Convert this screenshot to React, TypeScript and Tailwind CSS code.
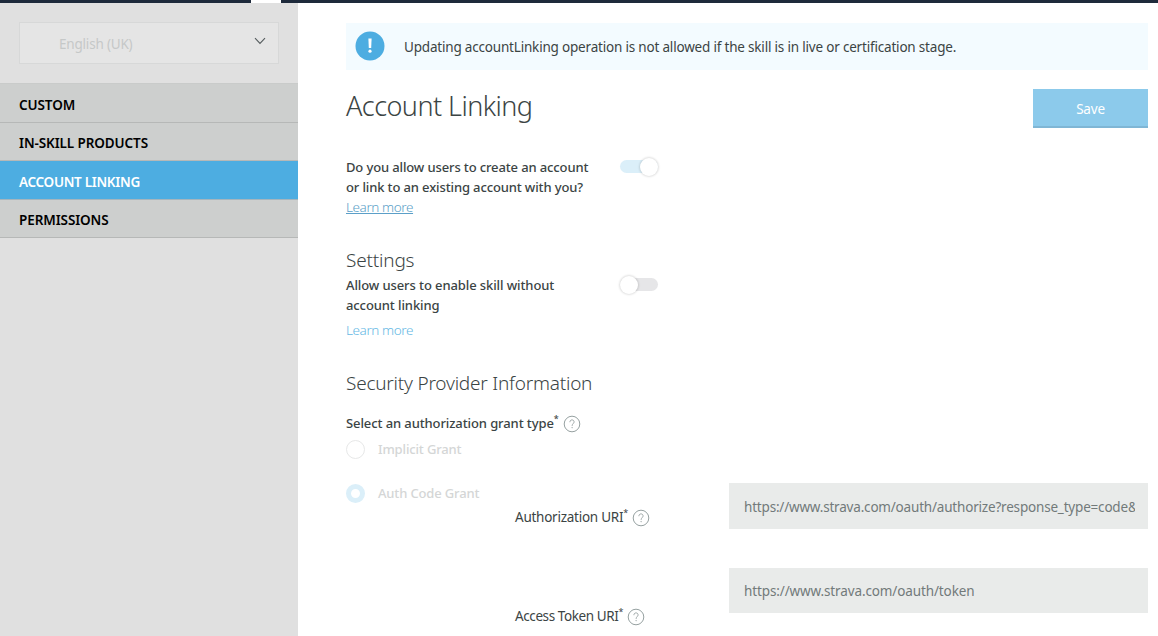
import type { ReactNode } from "react";

function HelpIcon() {
  return (
    <svg width="18" height="18" viewBox="0 0 18 18" fill="none" stroke="#8a9696" className="relative top-[0.5px] shrink-0">
      <circle cx="9" cy="9" r="7.8" strokeWidth="0.9" />
      <path d="M6.9 7.2c0-1.5.9-2.3 2.1-2.3s2.1.8 2.1 2c0 1.7-2 1.8-2 4" strokeWidth="0.8" />
      <circle cx="9.1" cy="12.7" r="0.35" strokeWidth="0.6" />
    </svg>
  );
}

function Toggle({ on }: { on: boolean }) {
  return (
    <div
      className={
        on
          ? "mt-[3px] flex h-[13px] w-[38px] items-center justify-end rounded-full bg-[#dbeff9]"
          : "mt-[3px] flex h-[13px] w-[38px] items-center justify-start rounded-full bg-[#e6e6e8]"
      }
    >
      <div className="mt-px size-[18px] shrink-0 rounded-full bg-white shadow-[0_0_2px_1px_rgba(0,0,0,0.12)]" />
    </div>
  );
}

function NavItem({ children, active = false }: { children: ReactNode; active?: boolean }) {
  return (
    <li
      className={
        active
          ? "flex h-[38.5px] items-center border-b border-[#a5b5bd] bg-[#4dade1] pt-[4px] pl-[19px] tracking-[-0.3px] text-white"
          : "flex h-[38.5px] items-center border-b border-[#b6b8b7] bg-[#cdcfce] pt-[4px] pl-[19px] tracking-[-0.1px] text-black"
      }
    >
      {children}
    </li>
  );
}

function FieldLabel({ children }: { children: ReactNode }) {
  return (
    <div className="flex h-5 items-center gap-1">
      <span className="flex">
        {children}
        <span className="-mt-1 text-[9px]">*</span>
      </span>
      <HelpIcon />
    </div>
  );
}

export default function App() {
  return (
    <div className="flex h-[636px] w-[1158px] flex-col overflow-hidden bg-white font-['Noto_Sans',sans-serif] text-[13.5px] leading-5 tracking-[-0.19px] text-[#3b4444]">
      <header className="flex h-[3px] shrink-0 bg-[#1e2a3b]">
        <div className="ml-[251px] w-[30px] bg-white" />
      </header>
      <div className="flex min-h-0 flex-1">
        <aside className="w-[298px] shrink-0 bg-[#e0e0e0] pt-[19px]">
          <div className="ml-[19px] flex h-[42px] w-[260px] items-center justify-between border border-[#d7d8d8] bg-[#e5e5e5] pr-3 pl-[39px] text-[#c5c8c8]">
            <span className="pt-0.5">English (UK)</span>
            <svg width="12" height="8" viewBox="0 0 12 8" fill="none" stroke="#555c5e" strokeWidth="1.1" className="-mt-1">
              <path d="M1 1.2 6 6.4l5-5.2" />
            </svg>
          </div>
          <ul className="mt-[19px] border-t border-[#c9cbca] text-[13.5px] font-semibold">
            <NavItem>CUSTOM</NavItem>
            <NavItem>IN-SKILL PRODUCTS</NavItem>
            <NavItem active>ACCOUNT LINKING</NavItem>
            <NavItem>PERMISSIONS</NavItem>
          </ul>
        </aside>
        <main className="flex-1 pt-5 pr-[10px] pl-12">
          <div className="flex h-[47px] items-center bg-[#f3fbff] pl-[9px]">
            <svg width="30" height="30" viewBox="0 0 30 30" className="-mt-px">
              <circle cx="15" cy="15" r="14.5" fill="#4dade1" />
              <path d="M13.4 7.5h3.2l-.4 9.5h-2.4z" fill="#fff" />
              <circle cx="15" cy="20.2" r="1.6" fill="#fff" />
            </svg>
            <p className="pt-px pl-[19px]">
              Updating accountLinking operation is not allowed if the skill is in live or certification stage.
            </p>
          </div>
          <div className="mt-[19px] flex justify-between">
            <h1 className="pt-px text-[27px] leading-8 font-light tracking-[-0.55px]">Account Linking</h1>
            <button className="h-[39px] w-[115px] border-b-2 border-[#7fb6d5] bg-[#8ccaeb] pt-[3px] text-white">Save</button>
          </div>
          <section className="mt-[29px] flex">
            <div className="w-[274px]">
              <p className="text-[13px] font-medium tracking-[-0.13px]">
                Do you allow users to create an account
                <br />
                or link to an existing account with you?
              </p>
              <a className="font-light tracking-[-0.4px] text-[#5b9fc8] underline">Learn more</a>
            </div>
            <Toggle on />
          </section>
          <h2 className="mt-[31px] text-[19px] leading-6 font-light">Settings</h2>
          <section className="mt-[3px] flex">
            <div className="w-[274px]">
              <p className="text-[13px] font-medium tracking-[-0.1px]">
                Allow users to enable skill without
                <br />
                account linking
              </p>
              <a className="mt-[5px] block font-light tracking-[-0.4px] text-[#65b8e4]">Learn more</a>
            </div>
            <Toggle on={false} />
          </section>
          <h2 className="mt-[31px] text-[19px] leading-6 font-light tracking-[-0.22px]">Security Provider Information</h2>
          <section className="pt-[18px]">
            <div className="text-[13px] font-medium tracking-[-0.1px]">
              <FieldLabel>Select an authorization grant type</FieldLabel>
            </div>
            <div className="mt-1.5 flex h-5 items-center gap-[13px] text-[13px] font-medium tracking-[-0.15px] text-[#d4d6d6]">
              <span className="size-[19px] rounded-full border border-[#e7e8e8]" />
              Implicit Grant
            </div>
            <div className="mt-6 flex h-5 items-center gap-[13px] text-[13px] font-medium tracking-[-0.15px] text-[#d4d6d6]">
              <span className="size-[19px] rounded-full border-[5px] border-[#dbeff9]" />
              Auth Code Grant
            </div>
          </section>
          <div className="-mt-[21px] grid grid-cols-[214px_419px] gap-y-[39px] pl-[169px]">
            <div className="pt-[25px] tracking-[-0.25px]">
              <FieldLabel>Authorization URI</FieldLabel>
            </div>
            <div className="mt-px flex h-[46px] items-center overflow-hidden bg-[#e9ebea] pr-[13px] pl-[15px] text-[#727a7a]">
              <span className="overflow-hidden pt-px whitespace-nowrap">https://www.strava.com/oauth/authorize?response_type=code&amp;</span>
            </div>
            <div className="pt-[38px] tracking-[-0.4px]">
              <FieldLabel>Access Token URI</FieldLabel>
            </div>
            <div className="flex h-[45px] items-center bg-[#e9ebea] px-[15px] tracking-[-0.12px] text-[#727a7a]">
              https://www.strava.com/oauth/token
            </div>
          </div>
        </main>
      </div>
    </div>
  );
}
